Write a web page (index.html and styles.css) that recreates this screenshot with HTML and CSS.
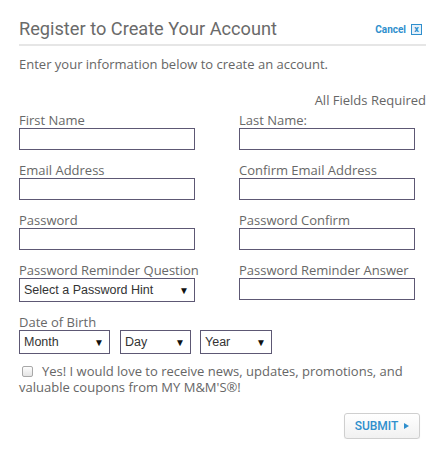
FILE: index.html
```html
<!DOCTYPE html>
<html>
<head>
<meta charset="utf-8">
<link rel="stylesheet" href="styles.css">
</head>
<body>
<div class="modal">
  <div class="head">
    <h1 class="title">Register to Create Your Account</h1>
    <a class="cancel" href="#">Cancel <span class="xbox">x</span></a>
  </div>
  <p class="intro">Enter your information below to create an account.</p>
  <p class="required">All Fields Required</p>
  <div class="grid">
    <div class="field"><label>First Name</label><input class="box" type="text"></div>
    <div class="field"><label>Last Name:</label><input class="box" type="text"></div>
    <div class="field"><label>Email Address</label><input class="box" type="text"></div>
    <div class="field"><label>Confirm Email Address</label><input class="box" type="text"></div>
    <div class="field"><label>Password</label><input class="box" type="text"></div>
    <div class="field"><label>Password Confirm</label><input class="box" type="text"></div>
    <div class="field"><label>Password Reminder Question</label><div class="sel sel-hint">Select a Password Hint<span class="arr">&#9660;</span></div></div>
    <div class="field answer"><label>Password Reminder Answer</label><input class="box" type="text"></div>
  </div>
  <div class="dob">
    <label>Date of Birth</label>
    <div class="dob-row">
      <div class="sel sel-month">Month<span class="arr">&#9660;</span></div>
      <div class="sel sel-day">Day<span class="arr">&#9660;</span></div>
      <div class="sel sel-year">Year<span class="arr">&#9660;</span></div>
    </div>
  </div>
  <div class="optin">
    <span class="check"></span>Yes! I would love to receive news, updates, promotions, and valuable coupons from MY M&amp;M'S&reg;!
  </div>
  <div class="actions">
    <button class="submit">SUBMIT <span class="tri"></span></button>
  </div>
</div>
</body>
</html>
```

FILE: styles.css
```css
* { box-sizing: border-box; }
body {
  margin: 0;
  background: #fff;
  font-family: "Open Sans", sans-serif;
  color: #666;
}
.modal {
  width: 440px;
  padding: 17px 14px 0 19px;
}
.head {
  display: flex;
  justify-content: space-between;
  align-items: center;
  border-bottom: 2px solid #e6e6e6;
  padding-bottom: 3px;
}
.title {
  margin: 0;
  font-family: Roboto, "Liberation Sans", sans-serif;
  font-weight: 400;
  font-size: 18.2px;
  line-height: 24px;
  color: #6a6a6a;
}
.cancel {
  font-family: Roboto, "Liberation Sans", sans-serif;
  font-size: 10px;
  font-weight: 700;
  color: #2f8fcd;
  text-decoration: none;
  display: flex;
  align-items: center;
  gap: 5px;
  margin-right: 4px;
}
.xbox {
  display: inline-flex;
  width: 11px;
  height: 11px;
  border: 1px solid #2f8fcd;
  background: #e6f1fa;
  font-size: 9px;
  line-height: 1;
  align-items: center;
  justify-content: center;
}
.intro {
  margin: 10px 0 0;
  font-size: 13px;
  line-height: 16px;
  color: #666;
}
.required {
  margin: 20px 0 0;
  text-align: right;
  font-size: 13px;
  line-height: 16px;
}
.grid {
  display: grid;
  grid-template-columns: 220px 176px;
  row-gap: 12px;
  margin-top: 4px;
}
.field label, .dob label {
  display: block;
  font-size: 13px;
  color: #686868;
  line-height: 16px;
}
.box {
  display: block;
  width: 176px;
  height: 22px;
  border: 1px solid #5d5874;
  margin: 0;
  padding: 0;
  background: #fff;
}
.sel {
  display: flex;
  justify-content: space-between;
  align-items: center;
  height: 24px;
  border: 1px solid #5d5874;
  padding: 0 5px 0 4px;
  font-family: "Liberation Sans", Arial, sans-serif;
  font-size: 12.5px;
  color: #333;
  background: #fff;
}
.arr { font-size: 10px; color: #111; }
.sel-hint { width: 176px; }
.dob { margin-top: 12px; }
.dob-row { display: flex; gap: 10px; }
.sel-month { width: 91px; }
.sel-day { width: 71px; }
.sel-year { width: 72px; margin-left: -1px; }
.optin {
  margin-top: 9px;
  font-size: 13px;
  line-height: 16px;
  color: #666;
}
.check {
  display: inline-block;
  width: 11px;
  height: 11px;
  border: 1px solid #a8a8a8;
  border-radius: 2px;
  background: linear-gradient(#fdfdfd, #e4e4e4);
  margin: 0 9px 0 3px;
  vertical-align: -1px;
}
.actions {
  display: flex;
  justify-content: flex-end;
  margin-top: 18px;
  padding-right: 6px;
}
.submit {
  width: 76px;
  height: 26px;
  border: 1px solid #cfcfcf;
  border-radius: 3px;
  background: linear-gradient(#ffffff, #f1f1f1);
  box-shadow: 0 1px 1px rgba(0,0,0,0.08);
  font-family: Roboto, "Liberation Sans", sans-serif;
  font-weight: 500;
  font-size: 12px;
  color: #2f8fcd;
  display: flex;
  align-items: center;
  justify-content: center;
  gap: 6px;
  padding: 0;
}
.tri {
  width: 0; height: 0;
  border-left: 5px solid #2f8fcd;
  border-top: 3.5px solid transparent;
  border-bottom: 3.5px solid transparent;
}
```
